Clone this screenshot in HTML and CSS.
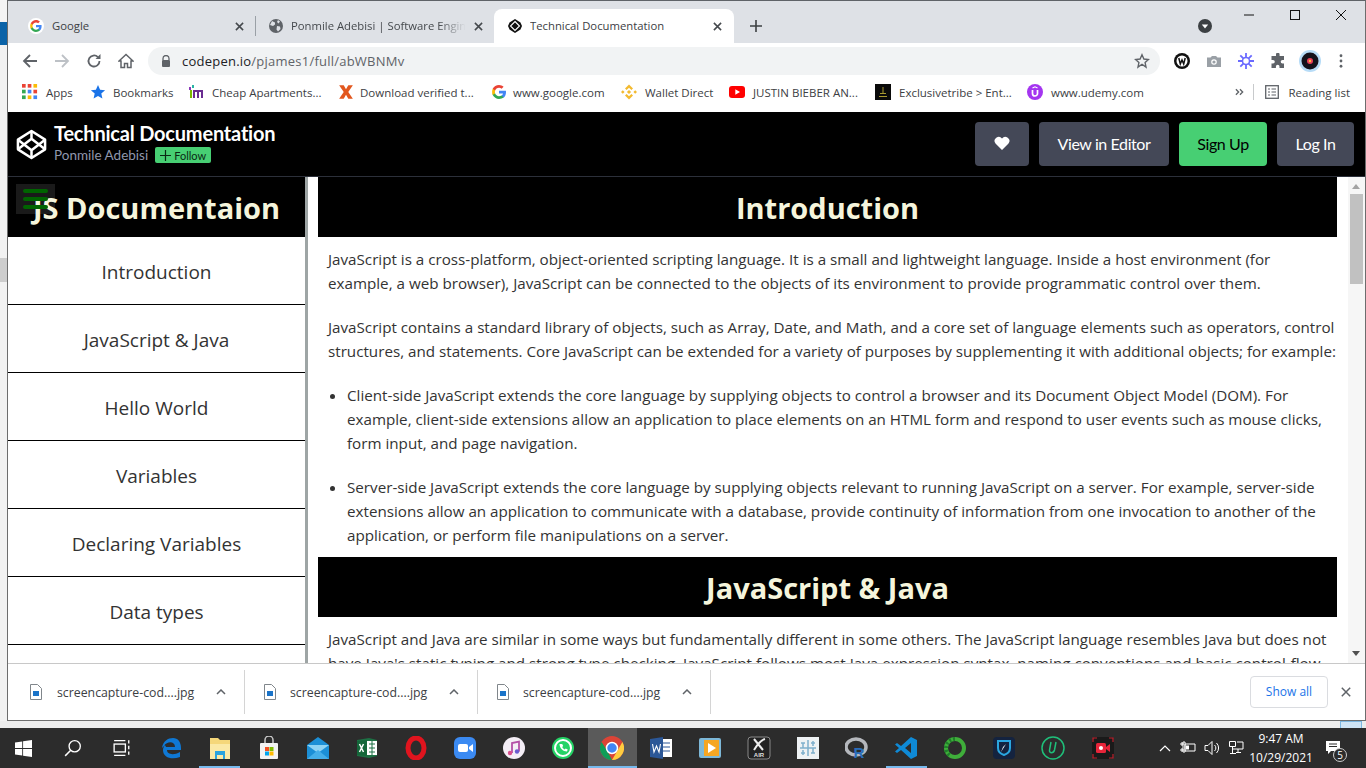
FILE: index.html
```html
<!DOCTYPE html>
<html lang="en">
<head>
<meta charset="utf-8">
<title>Technical Documentation</title>
<link rel="stylesheet" href="styles.css">
</head>
<body>
<div class="desktop">
  <div class="window">
    <div class="tabstrip">
      <div class="tab t1">
        <svg class="fav" viewBox="0 0 16 16"><circle cx="8" cy="8" r="8" fill="#fff"/><path d="M13.6 8.2c0-.5 0-.9-.1-1.3H8v2.400h3.200c-.1.8-.6 1.400-1.200 1.800v1.500h1.900c1.100-1 1.700-2.500 1.700-4.400z" fill="#4285f4"/><path d="M8 14c1.600 0 2.900-.5 3.900-1.400L10 11.100c-.5.400-1.200.6-2 .6-1.500 0-2.800-1-3.300-2.400H2.800v1.500C3.800 12.700 5.700 14 8 14z" fill="#34a853"/><path d="M4.700 9.300c-.3-.8-.3-1.700 0-2.600V5.200H2.800c-.8 1.600-.8 3.500 0 5.600z" fill="#fbbc05"/><path d="M8 4.400c.9 0 1.600.3 2.200.9l1.700-1.700C10.900 2.600 9.600 2 8 2 5.700 2 3.800 3.300 2.800 5.200l1.900 1.500C5.200 5.400 6.500 4.400 8 4.400z" fill="#ea4335"/></svg>
        <span class="tabtitle">Google</span><svg class="x" viewBox="0 0 10 10"><path d="M1 1l8 8M9 1L1 9" stroke="#45494d" stroke-width="1.700"/></svg>
      </div>
      <i class="tabsep"></i>
      <div class="tab t2">
        <svg class="fav" viewBox="0 0 16 16"><circle cx="8" cy="8" r="7" fill="#5f6368"/><path d="M4 3l3 1.500 0 2-2 1.500-3-1zM9 8l3 .5.500 2.500-2.500 2.500-1.500-2zM10 2l2 1.500-1.500 2-1.500-1.500z" fill="#dee1e6"/></svg>
        <span class="tabtitle fade">Ponmile Adebisi | Software Engineer</span><svg class="x" viewBox="0 0 10 10"><path d="M1 1l8 8M9 1L1 9" stroke="#45494d" stroke-width="1.700"/></svg>
      </div>
      <div class="tab t3">
        <svg class="fav" viewBox="0 0 16 16"><path d="M8 1l5.500 3.500 1.500 3.500-1.500 3.500L8 15l-5.500-3.500L1 8l1.500-3.500z" fill="#111"/><path d="M8 3.500L12.500 8 8 12.500 3.500 8z" fill="none" stroke="#fff" stroke-width="1.100"/><circle cx="8" cy="8" r="1.600" fill="#111"/></svg>
        <span class="tabtitle">Technical Documentation</span><svg class="x" viewBox="0 0 10 10"><path d="M1 1l8 8M9 1L1 9" stroke="#45494d" stroke-width="1.700"/></svg>
      </div>
      <svg class="plus" viewBox="0 0 12 12"><path d="M6 0v12M0 6h12" stroke="#3c4043" stroke-width="1.600"/></svg>
      <div class="tabspace"></div>
      <svg class="tabsearch" viewBox="0 0 14 14"><circle cx="7" cy="7" r="7" fill="#3c4043"/><path d="M3.800 5.500h6.400L7 9.500z" fill="#fff"/></svg>
      <div class="winctl">
        <span class="wc"><svg viewBox="0 0 12 12"><path d="M1 6h10" stroke="#111" stroke-width="1"/></svg></span>
        <span class="wc"><svg viewBox="0 0 12 12"><rect x="1.500" y="1.500" width="9" height="9" fill="none" stroke="#111"/></svg></span>
        <span class="wc"><svg viewBox="0 0 12 12"><path d="M1 1l10 10M11 1L1 11" stroke="#111" stroke-width="1"/></svg></span>
      </div>
    </div>

    <div class="toolbar">
      <svg class="nav" viewBox="0 0 16 16"><path d="M15 8H2M8 2L2 8l6 6" fill="none" stroke="#5f6368" stroke-width="1.800"/></svg>
      <svg class="nav" viewBox="0 0 16 16"><path d="M1 8h13M8 2l6 6-6 6" fill="none" stroke="#bdc1c6" stroke-width="1.800"/></svg>
      <svg class="nav" viewBox="0 0 16 16"><path d="M13.500 8a5.500 5.500 0 1 1-1.600-3.900" fill="none" stroke="#5f6368" stroke-width="1.800"/><path d="M14.500 1v5h-5z" fill="#5f6368"/></svg>
      <svg class="nav" viewBox="0 0 16 16"><path d="M8 1.500L1 8h2v6.500h3.500v-4h3v4H13V8h2z" fill="none" stroke="#5f6368" stroke-width="1.500"/></svg>
      <div class="omnibox">
        <svg class="lock" viewBox="0 0 10 12"><path d="M2 5V3.500a3 3 0 0 1 6 0V5" fill="none" stroke="#5f6368" stroke-width="1.300"/><rect x="1" y="5" width="8" height="7" rx="1" fill="#5f6368"/></svg>
        <span class="url">codepen.io<span class="urlpath">/pjames1/full/abWBNMv</span></span>
        <svg class="star" viewBox="0 0 16 16"><path d="M8 1.800l1.900 4.200 4.500.5-3.300 3.100.9 4.500L8 11.300l-4 2.800.9-4.500-3.300-3.100 4.500-.5z" fill="none" stroke="#5f6368" stroke-width="1.400"/></svg>
      </div>
      <div class="exts">
        <svg class="ext" viewBox="0 0 16 16"><circle cx="8" cy="8" r="8" fill="#111"/><circle cx="8" cy="8" r="5.500" fill="#fff"/><path d="M4.800 5l1.500 6L8 7l1.700 4 1.500-6" fill="none" stroke="#111" stroke-width="1.500"/></svg>
        <svg class="ext" viewBox="0 0 16 16"><path d="M1 4.500h3.500L6 3h4l1.500 1.500H15V14H1z" fill="#9aa0a6"/><circle cx="8" cy="9" r="2.800" fill="#fff"/><circle cx="8" cy="9" r="1.600" fill="#9aa0a6"/></svg>
        <svg class="ext" viewBox="0 0 16 16"><g stroke="#6a6aff" stroke-width="1.800"><path d="M8 0v16M0 8h16M2.300 2.300l11.400 11.400M13.700 2.300L2.300 13.700"/></g><circle cx="8" cy="8" r="3.500" fill="#fff" stroke="#6a6aff" stroke-width="1.500"/></svg>
        <svg class="ext" viewBox="0 0 16 16"><path d="M6 1.500a1.800 1.800 0 0 1 3.600 0V3H14v4h-1.500a1.800 1.800 0 0 0 0 3.600H14V15H9.500v-1.500a1.800 1.800 0 0 0-3.600 0V15H1.500v-4.500H3a1.800 1.800 0 0 0 0-3.600H1.500V3H6z" fill="#5f6368"/></svg>
        <svg class="avatar" viewBox="0 0 22 22"><circle cx="11" cy="11" r="11" fill="#b7dcf7"/><circle cx="11" cy="11" r="8.500" fill="#14121c"/><circle cx="11" cy="11" r="3" fill="#e8405a"/><circle cx="11" cy="11" r="1.200" fill="#ffc040"/></svg>
        <svg class="dots" viewBox="0 0 4 16"><g fill="#5f6368"><circle cx="2" cy="2" r="1.600"/><circle cx="2" cy="8" r="1.600"/><circle cx="2" cy="14" r="1.600"/></g></svg>
      </div>
    </div>

    <div class="bookmarks">
      <span class="bm b-apps"><svg class="bi" viewBox="0 0 14 14"><g><rect width="3.200" height="3.200" fill="#ea4335"/><rect x="5" width="3.200" height="3.200" fill="#ea4335"/><rect x="10" width="3.200" height="3.200" fill="#fbbc05"/><rect y="5" width="3.200" height="3.200" fill="#34a853"/><rect x="5" y="5" width="3.200" height="3.200" fill="#4285f4"/><rect x="10" y="5" width="3.200" height="3.200" fill="#ea4335"/><rect y="10" width="3.200" height="3.200" fill="#34a853"/><rect x="5" y="10" width="3.200" height="3.200" fill="#fbbc05"/><rect x="10" y="10" width="3.200" height="3.200" fill="#4285f4"/></g></svg>Apps</span>
      <span class="bm b-books"><svg class="bi" viewBox="0 0 16 16"><path d="M8 1l2.100 4.700 5 .5-3.800 3.400 1.100 5L8 12l-4.400 2.600 1.100-5L.9 6.200l5-.5z" fill="#1a73e8"/></svg>Bookmarks</span>
      <span class="bm b-cheap"><svg class="bi" viewBox="0 0 16 16"><path d="M1 3h2v3H1z" fill="#8a3ab9"/><path d="M4 1h2v3H4z" fill="#2ab5a5"/><path d="M2 6h2v8H2z" fill="#7ab800"/><path d="M5 6h10v8h-2V8h-2v6H9V8H7v6H5z" fill="#6a2c91"/></svg>Cheap Apartments...</span>
      <span class="bm b-dl"><svg class="bi" viewBox="0 0 14 14"><path d="M1 1h4l2 3.500L9 1h4L9 7l4 6H9L7 9.500 5 13H1l4-6z" fill="#e2571e"/></svg>Download verified t...</span>
      <span class="bm b-goog"><svg class="bi" viewBox="0 0 16 16"><path d="M15 8.200c0-.5 0-1-.1-1.500H8v2.800h4c-.2.900-.7 1.600-1.400 2.100v1.800h2.300C14.200 12.200 15 10.400 15 8.200z" fill="#4285f4"/><path d="M8 15c1.900 0 3.500-.6 4.700-1.700l-2.300-1.800c-.6.400-1.400.7-2.400.7-1.800 0-3.400-1.200-3.900-2.900H1.700v1.800C2.900 13.500 5.300 15 8 15z" fill="#34a853"/><path d="M4.100 9.300c-.3-.9-.3-1.800 0-2.700V4.800H1.700c-.8 1.600-.8 4.600 0 6.300z" fill="#fbbc05"/><path d="M8 3.800c1 0 1.900.4 2.600 1l2-2C11.400 1.700 9.800 1 8 1 5.300 1 2.900 2.500 1.700 4.800l2.400 1.800C4.600 5 6.200 3.800 8 3.800z" fill="#ea4335"/></svg>www.google.com</span>
      <span class="bm b-wal"><svg class="bi" viewBox="0 0 16 16"><g fill="#f3ba2f"><path d="M8 .5l4 4-1.600 1.500L8 3.700 5.600 6 4 4.500zM0 8l1.800-1.800L3.600 8 1.800 9.800zM12.400 8l1.800-1.800L16 8l-1.800 1.800zM8 5.900L10.100 8 8 10.100 5.900 8zM8 15.500l-4-4L5.600 10 8 12.300 10.400 10l1.600 1.500z"/></g></svg>Wallet Direct</span>
      <span class="bm b-yt"><svg class="bi" viewBox="0 0 16 12"><rect width="16" height="12" rx="3" fill="#f00"/><path d="M6.300 3.300L11 6l-4.700 2.700z" fill="#fff"/></svg>JUSTIN BIEBER AN...</span>
      <span class="bm b-ex"><svg class="bi" viewBox="0 0 16 16"><rect width="16" height="16" fill="#0a0a0a"/><path d="M7.500 3h1v6h-1zM5 9h6v1H5zM4 12h8v1H4z" fill="#a89a30"/></svg>Exclusivetribe &gt; Ent...</span>
      <span class="bm b-ud"><svg class="bi" viewBox="0 0 16 16"><circle cx="8" cy="8" r="8" fill="#a435f0"/><path d="M5.500 6v3.500a2.500 2.500 0 0 0 5 0V6" fill="none" stroke="#fff" stroke-width="1.700"/><path d="M5.500 4L8 2.800 10.500 4" fill="none" stroke="#fff" stroke-width="1.200"/></svg>www.udemy.com</span>
      <span class="bmspace"></span>
      <svg class="chev" viewBox="0 0 10 8"><path d="M1 1l3 3-3 3M5.500 1l3 3-3 3" fill="none" stroke="#5f6368" stroke-width="1.500"/></svg>
      <i class="bmsep"></i>
      <span class="bm b-read"><svg class="bi" viewBox="0 0 14 14"><rect x=".7" y=".7" width="12.600" height="12.600" fill="none" stroke="#5f6368" stroke-width="1.300"/><path d="M3 4h2M6.500 4H11M3 7h2M6.500 7H11M3 10h2M6.500 10H11" stroke="#5f6368" stroke-width="1.200"/></svg>Reading list</span>
    </div>

    <header class="cp-head">
      <svg class="cp-logo" viewBox="0 0 32 32"><g fill="none" stroke="#fff" stroke-width="2.600" stroke-linejoin="round"><path d="M16 2L30 11v10L16 30 2 21V11z"/><path d="M16 2v8M16 22v8M2 11l14 11 14-11M2 21l14-11 14 11"/></g></svg>
      <div class="cp-meta">
        <h1 class="cp-title">Technical Documentation</h1>
        <div class="cp-byline"><span class="cp-author">Ponmile Adebisi</span><span class="cp-follow"><svg class="cp-plus" viewBox="0 0 11 11"><path d="M5.500 0v11M0 5.500h11" stroke="#0a2a14" stroke-width="1.200"/></svg>Follow</span></div>
      </div>
      <div class="cp-space"></div>
      <button class="cp-btn heart"><svg viewBox="0 0 16 14"><path d="M8 14L1.500 7.500A4 4 0 0 1 8 2.500a4 4 0 0 1 6.500 5z" fill="#fff"/></svg></button>
      <button class="cp-btn b-view">View in Editor</button>
      <button class="cp-btn green">Sign Up</button>
      <button class="cp-btn b-log">Log In</button>
    </header>

    <div class="page">
      <nav class="sidenav">
        <h2 class="sidehead">JS Documentaion</h2>
        <div class="burger"><i></i><i></i><i></i></div>
        <a class="navitem">Introduction</a>
        <a class="navitem">JavaScript &amp; Java</a>
        <a class="navitem">Hello World</a>
        <a class="navitem">Variables</a>
        <a class="navitem">Declaring Variables</a>
        <a class="navitem">Data types</a>
      </nav>
      <main class="main">
        <h2 class="sec-head">Introduction</h2>
        <p>JavaScript is a cross-platform, object-oriented scripting language. It is a small and lightweight language. Inside a host environment (for<br>example, a web browser), JavaScript can be connected to the objects of its environment to provide programmatic control over them.</p>
        <p>JavaScript contains a standard library of objects, such as Array, Date, and Math, and a core set of language elements such as operators, control<br>structures, and statements. Core JavaScript can be extended for a variety of purposes by supplementing it with additional objects; for example:</p>
        <ul>
          <li>Client-side JavaScript extends the core language by supplying objects to control a browser and its Document Object Model (DOM). For<br>example, client-side extensions allow an application to place elements on an HTML form and respond to user events such as mouse clicks,<br>form input, and page navigation.</li>
          <li>Server-side JavaScript extends the core language by supplying objects relevant to running JavaScript on a server. For example, server-side<br>extensions allow an application to communicate with a database, provide continuity of information from one invocation to another of the<br>application, or perform file manipulations on a server.</li>
        </ul>
        <h2 class="sec-head">JavaScript &amp; Java</h2>
        <p>JavaScript and Java are similar in some ways but fundamentally different in some others. The JavaScript language resembles Java but does not<br>have Java's static typing and strong type checking. JavaScript follows most Java expression syntax, naming conventions and basic control-flow</p>
      </main>
      <div class="scrollbar">
        <svg class="sb-arrow" viewBox="0 0 8 5"><path d="M4 0l4 5H0z" fill="#a3a3a3"/></svg>
        <div class="sb-thumb"></div>
        <div class="sb-track"></div>
        <svg class="sb-arrow" viewBox="0 0 8 5"><path d="M0 0h8L4 5z" fill="#505050"/></svg>
      </div>
    </div>

    <div class="downloads">
      <div class="dl"><svg class="file" viewBox="0 0 12 16"><path d="M.5.500h7l4 4v11H.5z" fill="#fff" stroke="#80868b"/><rect x="3" y="7" width="6" height="5" fill="#1a73c8"/></svg><span class="dlname">screencapture-cod....jpg</span><svg class="caret" viewBox="0 0 10 6"><path d="M1 5l4-4 4 4" fill="none" stroke="#5f6368" stroke-width="1.500"/></svg></div>
      <div class="dl"><svg class="file" viewBox="0 0 12 16"><path d="M.5.500h7l4 4v11H.5z" fill="#fff" stroke="#80868b"/><rect x="3" y="7" width="6" height="5" fill="#1a73c8"/></svg><span class="dlname">screencapture-cod....jpg</span><svg class="caret" viewBox="0 0 10 6"><path d="M1 5l4-4 4 4" fill="none" stroke="#5f6368" stroke-width="1.500"/></svg></div>
      <div class="dl"><svg class="file" viewBox="0 0 12 16"><path d="M.5.500h7l4 4v11H.5z" fill="#fff" stroke="#80868b"/><rect x="3" y="7" width="6" height="5" fill="#1a73c8"/></svg><span class="dlname">screencapture-cod....jpg</span><svg class="caret" viewBox="0 0 10 6"><path d="M1 5l4-4 4 4" fill="none" stroke="#5f6368" stroke-width="1.500"/></svg></div>
      <div class="dlspace"></div>
      <button class="showall">Show all</button>
      <svg class="dlclose" viewBox="0 0 10 10"><path d="M.8.800l8.400 8.400M9.200.800L.8 9.200" stroke="#5f6368" stroke-width="1.500"/></svg>
    </div>
  </div>

  <div class="understrip"><i class="viewbtn"></i></div>

  <div class="taskbar">
    <svg class="start" viewBox="0 0 16 16"><path d="M0 2.300l6.800-1v6.300H0zM7.600 1.200L16 0v7.600H7.600zM0 8.400h6.800v6.300L0 13.700zM7.600 8.400H16V16l-8.400-1.200z" fill="#fff"/></svg>
    <span class="tb"><svg class="ti s18" viewBox="0 0 16 16"><circle cx="9.500" cy="6.500" r="5" fill="none" stroke="#fff" stroke-width="1.200"/><path d="M6 10l-5 5" stroke="#fff" stroke-width="1.300"/></svg></span>
    <span class="tb"><svg class="ti s18" viewBox="0 0 16 16"><g fill="none" stroke="#fff" stroke-width="1.200"><rect x="1" y="4.500" width="10" height="7"/><path d="M1 1.500h10M1 14.500h10"/><path d="M14 1v3M14 6v3M14 11v3"/></g></svg></span>
    <span class="tb"><svg class="ti" viewBox="0 0 24 24"><path d="M3 12C4 5 9 2 14 2c5 0 8 4 8 10v2H8c0 4 6 6 13 2v5c-8 3-17 1-17-7 0-2 1-4 2-5 0 1 1 1 1 2h9c0-6-8-6-11-1z" fill="#0f78d4"/></svg></span>
    <span class="tb open"><svg class="ti" viewBox="0 0 24 24"><path d="M2 2h8l2 2h10v19H2z" fill="#f5d77a"/><path d="M2 8h20v15H2z" fill="#fbe9a6"/><path d="M7 15h10v8h-2v-4H9v4H7z" fill="#2ba3de"/></svg></span>
    <span class="tb"><svg class="ti" viewBox="0 0 24 24"><path d="M8 7V4a4 4 0 0 1 8 0v3" fill="none" stroke="#c8c8c8" stroke-width="1.500"/><rect x="3" y="7" width="18" height="16" rx="1" fill="#f2f2f2"/><rect x="8" y="11" width="4" height="4" fill="#f25022"/><rect x="12.500" y="11" width="4" height="4" fill="#7fba00"/><rect x="8" y="15.500" width="4" height="4" fill="#00a4ef"/><rect x="12.500" y="15.500" width="4" height="4" fill="#ffb900"/></svg></span>
    <span class="tb"><svg class="ti" viewBox="0 0 24 24"><path d="M1 9l11-8 11 8v14H1z" fill="#1c8fd6"/><path d="M1 9l11 8 11-8" fill="#8fd3f4"/><path d="M1 23l11-9 11 9z" fill="#45aee8"/></svg></span>
    <span class="tb"><svg class="ti" viewBox="0 0 24 24"><path d="M14 2l8 2v16l-8 2L2 20V4z" fill="#1d7044"/><path d="M12 5h10v14H12z" fill="#fff"/><path d="M14 8h6M14 12h6M14 16h6M17 5v14" stroke="#1d7044"/><path d="M2 5l10-1v16L2 19z" fill="#14673a"/><path d="M4.500 8l4 8M8.500 8l-4 8" stroke="#fff" stroke-width="1.500"/></svg></span>
    <span class="tb"><svg class="ti" viewBox="0 0 24 24"><ellipse cx="12" cy="12" rx="8" ry="10" fill="none" stroke="#e0141e" stroke-width="5"/></svg></span>
    <span class="tb"><svg class="ti" viewBox="0 0 24 24"><rect x="1" y="1" width="22" height="22" rx="6" fill="#3b8af2"/><rect x="5" y="8" width="10" height="8" rx="2" fill="#fff"/><path d="M16 11l4-3v8l-4-3z" fill="#fff"/></svg></span>
    <span class="tb"><svg class="ti" viewBox="0 0 24 24"><circle cx="12" cy="12" r="11" fill="#f4eef6"/><path d="M10 17V7l7-1.500v10" fill="none" stroke="#b44fa8" stroke-width="1.800"/><circle cx="8" cy="17" r="2.200" fill="#d94d8c"/><circle cx="15" cy="15.500" r="2.200" fill="#6a5bd0"/></svg></span>
    <span class="tb"><svg class="ti" viewBox="0 0 24 24"><circle cx="12" cy="12" r="11" fill="#25d366"/><circle cx="12" cy="12" r="8" fill="none" stroke="#fff" stroke-width="2"/><path d="M8.500 8c0 4 3.500 7.500 7.500 7.500l.7-2-2-1-1 1c-1-.5-2-1.500-2.500-2.500l1-1-1-2z" fill="#fff"/></svg></span>
    <span class="tb active"><svg class="ti" viewBox="0 0 24 24"><circle cx="12" cy="12" r="12" fill="#db4437"/><path d="M12 24A12 12 0 0 1 1.600 6L7 14.500z" fill="#0f9d58"/><path d="M12 24l5.500-9.500L22.400 6A12 12 0 0 1 12 24z" fill="#ffcd40"/><circle cx="12" cy="12" r="5.500" fill="#4285f4" stroke="#fff" stroke-width="1.500"/></svg></span>
    <span class="tb"><svg class="ti" viewBox="0 0 24 24"><rect x="10" y="3" width="13" height="18" fill="#fff"/><path d="M12 7h9M12 11h9M12 15h9" stroke="#2b5797"/><path d="M1 3l13-2v22L1 21z" fill="#2b5797"/><path d="M3.500 8l1.500 8 2.500-6 2.500 6 1.500-8" fill="none" stroke="#fff" stroke-width="1.100"/></svg></span>
    <span class="tb"><svg class="ti" viewBox="0 0 24 24"><rect x="1" y="2" width="22" height="20" rx="2" fill="#7db8d8"/><rect x="6" y="4" width="15" height="16" fill="#f5a623"/><path d="M10 7l8 5-8 5z" fill="#fff"/></svg></span>
    <span class="tb"><svg class="ti" viewBox="0 0 24 24"><rect x="1" y="1" width="22" height="22" rx="3" fill="#222" stroke="#888"/><path d="M7 3l9 11M18 3C14 4 10 9 7 14" stroke="#eee" stroke-width="2" fill="none"/><text class="airlogo" x="12" y="21">AIR</text></svg></span>
    <span class="tb"><svg class="ti" viewBox="0 0 24 24"><rect x="1" y="1" width="22" height="22" fill="#eef2f4"/><path d="M12 4v16M4 12h16M7 7v5M17 12v5M5 7h4M15 17h4M17 5v5M7 14v5M15 7h4M5 17h4" stroke="#7fb0cc" stroke-width="1.500"/></svg></span>
    <span class="tb"><svg class="ti" viewBox="0 0 24 24"><ellipse cx="11" cy="11" rx="10" ry="8" fill="none" stroke="#b5b8bd" stroke-width="3.500"/><text class="rlogo" x="14" y="22">R</text></svg></span>
    <span class="tb open"><svg class="ti" viewBox="0 0 24 24"><path d="M17 1l6 3v16l-6 3L7 14l-4 3-2-1.500L5 12 1 8.500 3 7l4 3zM17 7l-6 5 6 5z" fill="#0f8ad6"/></svg></span>
    <span class="tb"><svg class="ti" viewBox="0 0 24 24"><circle cx="12" cy="12" r="9" fill="none" stroke="#3fae3a" stroke-width="4"/><path d="M12 3a9 9 0 0 0-9 9 9 9 0 0 0 5 8" fill="none" stroke="#1f7f2a" stroke-width="4" stroke-dasharray="2 2"/></svg></span>
    <span class="tb"><svg class="ti" viewBox="0 0 24 24"><rect x="1" y="1" width="22" height="22" rx="4" fill="#14233f"/><path d="M6 5h12v7c0 4-3 6-6 7-3-1-6-3-6-7z" fill="none" stroke="#2aa6e0" stroke-width="2"/><path d="M14 8l-5 8 2-5z" fill="#fff"/></svg></span>
    <span class="tb"><svg class="ti" viewBox="0 0 24 24"><circle cx="12" cy="12" r="11" fill="none" stroke="#1fbf7a" stroke-width="1.500"/><path d="M10 6l-1.500 8c-.5 3.500 4 3.500 5 0l1.500-8" fill="none" stroke="#1fbf7a" stroke-width="1.500"/></svg></span>
    <span class="tb"><svg class="ti" viewBox="0 0 24 24"><rect x="1" y="1" width="22" height="22" rx="4" fill="#1a1a1a"/><path d="M2 6V2h4M18 2h4v4M22 18v4h-4M6 22H2v-4" fill="none" stroke="#c0202c" stroke-width="1.200"/><rect x="5" y="7" width="10" height="10" rx="1.500" fill="#e8253a"/><path d="M15 11l4-3v8l-4-3z" fill="#e8253a"/><circle cx="10" cy="12" r="2" fill="#fff"/></svg></span>
    <span class="tb-space"></span>
    <div class="tray">
      <svg class="tr-caret" viewBox="0 0 12 7"><path d="M1 6l5-5 5 5" fill="none" stroke="#fff" stroke-width="1.200"/></svg>
      <svg class="tr" viewBox="0 0 16 16"><path d="M1 3h2v2H1zM1 9h2v2H1zM3 2h2v10H3zM5 4h10v7H5z" fill="none" stroke="#fff"/><rect x="6" y="5.500" width="3" height="4" fill="#fff"/></svg>
      <svg class="tr" viewBox="0 0 16 16"><path d="M1 5.500h3l4-4v13l-4-4H1z" fill="none" stroke="#fff"/><path d="M10.500 5a4 4 0 0 1 0 6M12.500 3a7 7 0 0 1 0 10" fill="none" stroke="#fff"/></svg>
      <svg class="tr" viewBox="0 0 16 16"><path d="M1.500 1.500h6v5h-6zM4 9h11v-7H9M4.500 6.500V13M2 13.500h6M10 9v3M8 12.500h5" fill="none" stroke="#fff"/></svg>
      <div class="clock"><span>9:47 AM</span><span>10/29/2021</span></div>
      <div class="notify">
        <svg class="note" viewBox="0 0 16 16"><path d="M1 1h14v10H6l-3 3v-3H1z" fill="#fff"/><path d="M4 4h8M4 6.500h8" stroke="#2b2b2b"/></svg>
        <span class="badge">5</span>
      </div>
    </div>
  </div>
</div>
</body>
</html>
```
FILE: styles.css
```css
* { box-sizing: border-box; }
html, body { margin: 0; padding: 0; height: 768px; overflow: hidden; }
body { font-family: "Open Sans", "Noto Sans", sans-serif; background: #c9c9c9; }
.desktop { width: 1366px; height: 768px; display: flex; flex-direction: column; background: linear-gradient(#f4f4f4 0 22px, #0b63a8 22px 45px, #f2f2f2 45px 258px, #cdcdcd 258px 282px, #f2f2f2 282px 720px); }
.window { margin-left: 7px; width: 1359px; height: 721px; display: flex; flex-direction: column; background: #fff; border: 1px solid #6d6d6d; border-top-color: #5f6368; overflow: hidden; flex: none; }
.understrip { height: 7px; background: #ececec; display: flex; justify-content: flex-end; flex: none; }
.viewbtn { width: 22px; height: 7px; margin-right: 4px; background: #cfe4f5; border: 1px solid #7db7e2; border-bottom: 0; }

.tabstrip { height: 42px; background: #dee1e6; display: flex; align-items: flex-end; flex: none; }
.tab { height: 34px; display: flex; align-items: center; font-size: 11.300px; color: #3c4043; flex: none; }
.t1 { width: 247px; padding: 0 7px 0 20px; }
.t2 { width: 238px; padding: 0 7px 0 12px; }
.t3 { width: 240px; padding: 0 8px 0 13px; background: #fff; border-radius: 8px 8px 0 0; }
.tabsep { width: 1px; height: 20px; background: #9aa0a6; margin-bottom: 7px; flex: none; }
.fav { width: 16px; height: 16px; margin-right: 7px; flex: none; }
.t1 .fav { margin-right: 8px; }
.tabtitle { flex: 1; white-space: nowrap; overflow: hidden; padding-bottom: 2px; }
.fade { color: #45494d; -webkit-mask-image: linear-gradient(to right, #000 82%, transparent 97%); mask-image: linear-gradient(to right, #000 82%, transparent 97%); }
.x { width: 9px; height: 9px; margin: 0 4px 0 3px; flex: none; }
.plus { width: 12px; height: 12px; margin: 0 0 11px 16px; flex: none; }
.tabspace { flex: 1; }
.tabsearch { width: 14px; height: 14px; margin: 0 14px 10px 0; flex: none; }
.winctl { display: flex; align-self: flex-start; margin-top: 8px; margin-right: 1px; }
.wc { width: 46px; height: 12px; display: flex; justify-content: center; }
.wc svg { width: 12px; height: 12px; }

.toolbar { height: 36px; background: #fff; display: flex; align-items: center; padding: 0 0 0 14px; flex: none; }
.nav { width: 16px; height: 16px; margin-right: 16px; flex: none; }
.omnibox { width: 1012px; height: 28px; margin-left: -2px; background: #f1f3f4; border-radius: 14px; display: flex; align-items: center; padding: 0 10px 0 13px; flex: none; }
.lock { width: 10px; height: 12px; margin-right: 11px; flex: none; }
.url { flex: 1; font-size: 13px; color: #202124; letter-spacing: .23px; }
.urlpath { color: #5f6368; }
.star { width: 16px; height: 16px; flex: none; }
.exts { display: flex; align-items: center; margin-left: 14px; }
.ext { width: 16px; height: 16px; margin-right: 16px; flex: none; }
.avatar { width: 22px; height: 22px; margin: 0 18px 0 -3px; flex: none; }
.dots { width: 4px; height: 14px; flex: none; }

.bookmarks { height: 33px; background: #fff; display: flex; align-items: center; padding: 0 15px 7px 14px; font-size: 11.500px; color: #3c4043; flex: none; white-space: nowrap; }
.bm { display: inline-flex; align-items: center; flex: none; }
.bi { width: 16px; height: 16px; margin-right: 8px; flex: none; }
.b-apps { width: 68px; } .b-books { width: 98px; } .b-cheap { width: 150px; } .b-dl { width: 153px; } .b-goog { width: 130px; } .b-wal { width: 108px; } .b-yt { width: 146px; } .b-ex { width: 152px; } .b-ud { width: 120px; }
.b-books .bi { margin-right: 7px; }
.b-dl .bi, .b-goog .bi { margin-right: 6px; }
.b-yt .bi { height: 12px; }
.b-read .bi { width: 14px; height: 14px; margin-right: 9px; }
.bmspace { flex: 1; }
.chev { width: 9px; height: 8px; flex: none; }
.bmsep { width: 1px; height: 16px; background: #c8cacc; margin: 0 11px 0 9px; flex: none; }

.cp-head { height: 65px; background: #000; border-bottom: 1px solid #2c303a; display: flex; align-items: center; padding: 0 11px 0 8px; flex: none; font-family: Lato, sans-serif; }
.cp-logo { width: 31px; height: 31px; flex: none; margin-right: 7px; }
.cp-meta { display: flex; flex-direction: column; padding-bottom: 4px; }
.cp-title { margin: 0; font-size: 20px; line-height: 24px; font-weight: 700; color: #fff; letter-spacing: -.2px; }
.cp-byline { display: flex; align-items: center; margin-top: 2px; height: 16px; }
.cp-author { font-size: 13.500px; color: #9097ad; }
.cp-follow { margin-left: 7px; height: 16px; width: 56px; background: #47cf73; border-radius: 2px; color: #0a2a14; font-size: 11px; display: flex; align-items: center; justify-content: center; }
.cp-plus { width: 11px; height: 11px; margin-right: 3px; flex: none; }
.cp-space { flex: 1; }
.cp-btn { height: 44px; margin-left: 10px; padding: 0 0 2px; background: #444857; color: #fff; border: 0; border-radius: 4px; font: 400 16px Lato, sans-serif; flex: none; letter-spacing: -.4px; }
.heart { width: 54px; display: flex; align-items: center; justify-content: center; }
.heart svg { width: 16px; height: 14px; }
.b-view { width: 130px; }
.green { background: #47cf73; color: #000; width: 88px; }
.b-log { width: 77px; }

.page { height: 486px; display: flex; flex: none; overflow: hidden; background: #fff; position: relative; }
.sidenav { width: 300px; height: 486px; flex: none; border-right: 3px solid #9ea5a5; position: relative; overflow: hidden; }
.sidehead { margin: 0; height: 60px; background: #000; color: #f5f5dc; font-size: 29px; font-weight: 700; line-height: 62px; text-align: center; white-space: nowrap; }
.burger { position: absolute; left: 8px; top: 7px; width: 39px; height: 30px; background: rgba(255,255,255,.1); display: flex; flex-direction: column; justify-content: center; gap: 4px; padding-left: 7px; }
.burger i { display: block; width: 25px; height: 4px; border-radius: 2px; background: #006400; }
.navitem { display: block; height: 68px; line-height: 70px; border-bottom: 1px solid #000; text-align: center; font-size: 19px; color: #333; }
.main { width: 1040px; height: 486px; flex: none; padding: 0 11px 0 10px; overflow: hidden; font-size: 15.200px; line-height: 24px; color: #333; white-space: nowrap; }
.sec-head { margin: 0; height: 60px; background: #000; color: #f5f5dc; font-size: 29px; font-weight: 700; line-height: 62px; text-align: center; }
.main p { margin: 10px 10px 20px; }
.main ul { margin: 0; padding: 0 0 0 29px; }
.main li { margin-bottom: 20px; }
.main li:last-child { margin-bottom: 10px; }
.scrollbar { width: 17px; height: 486px; background: #f6f6f6; display: flex; flex-direction: column; align-items: center; flex: none; padding: 7px 1px 7px 0; }
.sb-arrow { width: 8px; height: 5px; flex: none; }
.sb-thumb { width: 13px; height: 90px; background: #c1c1c1; margin-top: 5px; flex: none; }
.sb-track { flex: 1; }

.downloads { height: 57px; background: #fff; border-top: 1px solid #c8c8c8; display: flex; align-items: center; flex: none; }
.dl { width: 233px; height: 44px; display: flex; align-items: center; padding-left: 19px; border-right: 1px solid #d4d4d4; font-size: 12.300px; color: #3c4043; flex: none; }
.dl:first-child { width: 237px; padding-left: 22px; }
.file { width: 12px; height: 16px; margin-right: 14px; flex: none; }
.dl:first-child .file { margin-right: 15px; }
.dlname { width: 159px; white-space: nowrap; flex: none; }
.caret { width: 10px; height: 6px; flex: none; }
.dlspace { flex: 1; }
.showall { width: 78px; height: 32px; background: #fff; border: 1px solid #dadce0; border-radius: 4px; color: #1a73e8; font: 500 12px "Open Sans", sans-serif; margin-right: 13px; margin-top: -1px; flex: none; }
.dlclose { width: 10px; height: 10px; margin-right: 14px; margin-top: -1px; flex: none; }

.taskbar { height: 40px; background: #2c2c2c; display: flex; align-items: center; flex: none; }
.start { width: 17px; height: 17px; margin: 0 16px 0 15px; flex: none; }
.tb { width: 49.050px; height: 40px; display: flex; align-items: center; justify-content: center; flex: none; position: relative; }
.open::after { content: ""; position: absolute; left: 4px; right: 4px; bottom: 0; height: 2px; background: #76b9ed; }
.active { background: #5a5a5a; }
.active::after { content: ""; position: absolute; left: 0; right: 0; bottom: 0; height: 2px; background: #76b9ed; }
.ti { width: 24px; height: 24px; }
.s18 { width: 18px; height: 18px; }
.rlogo { font: 700 15px "Liberation Sans", sans-serif; fill: #2a6ebb; text-anchor: middle; }
.airlogo { font: 700 6px "Liberation Sans", sans-serif; fill: #ddd; text-anchor: middle; }
.tb-space { flex: 1; }
.tray { display: flex; align-items: center; flex: none; }
.tr-caret { width: 12px; height: 7px; margin-right: 9px; flex: none; }
.tr { width: 16px; height: 16px; margin-right: 8px; flex: none; }
.clock { width: 58px; display: flex; flex-direction: column; align-items: center; font-size: 12px; line-height: 19px; color: #fff; white-space: nowrap; }
.notify { width: 56px; height: 40px; position: relative; display: flex; align-items: center; padding-left: 15px; }
.note { width: 16px; height: 16px; }
.badge { position: absolute; right: 19px; bottom: 6px; width: 14px; height: 14px; border-radius: 50%; background: #2c2c2c; border: 1px solid #ccc; color: #fff; font-size: 10px; line-height: 12px; text-align: center; }
```
